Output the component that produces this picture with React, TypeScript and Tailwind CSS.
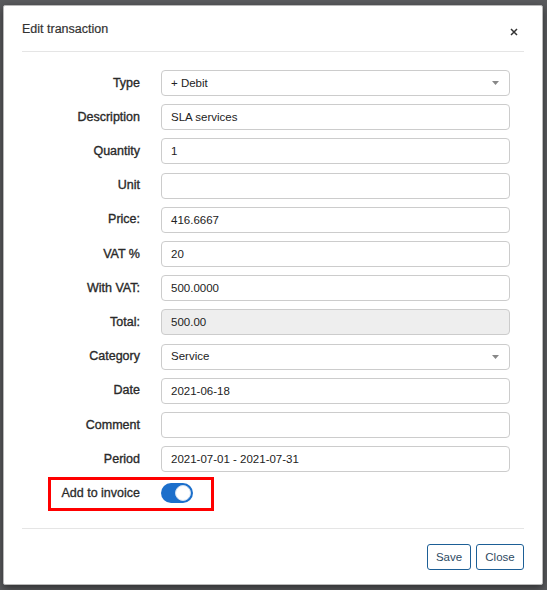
const font = { fontFamily: '"Liberation Sans", Arial, sans-serif' };

type Field = {
  label: string;
  value: string;
  select?: boolean;
  readOnly?: boolean;
};

const fields: Field[] = [
  { label: "Type", value: "+ Debit", select: true },
  { label: "Description", value: "SLA services" },
  { label: "Quantity", value: "1" },
  { label: "Unit", value: "" },
  { label: "Price:", value: "416.6667" },
  { label: "VAT %", value: "20" },
  { label: "With VAT:", value: "500.0000" },
  { label: "Total:", value: "500.00", readOnly: true },
  { label: "Category", value: "Service", select: true },
  { label: "Date", value: "2021-06-18" },
  { label: "Comment", value: "" },
  { label: "Period", value: "2021-07-01 - 2021-07-31" },
];

function FormRow({ field }: { field: Field }) {
  return (
    <div className="flex items-center h-[26px]">
      <label className="w-[118px] shrink-0 text-right text-[12.5px] text-[#2a2a2a] [-webkit-text-stroke:0.35px_#2a2a2a]">
        {field.label}
      </label>
      <div
        className={`ml-[21px] w-[349px] h-[26px] flex items-center justify-between rounded-[4px] border border-[#ccc] px-[9px] text-[11.5px] text-[#222] ${
          field.readOnly ? "bg-[#eee]" : "bg-white"
        }`}
      >
        <span className="mt-[1px]">{field.value}</span>
        {field.select && (
          <svg width="7" height="4" viewBox="0 0 7 4" className="mr-[1px]">
            <path d="M0 0h7L3.5 4z" fill="#888" />
          </svg>
        )}
      </div>
    </div>
  );
}

export default function App() {
  return (
    <div className="w-[547px] h-[590px] bg-[#5a5b5e] overflow-hidden" style={font}>
      <div className="ml-[3px] mt-[5px] w-[540px] h-[580px] bg-white border border-[#b9b9b9] rounded-[2px] shadow-[0_3px_9px_rgba(0,0,0,0.5)] px-[18px] flex flex-col">
        {/* Header */}
        <div className="h-[46px] flex items-center justify-between border-b border-[#e5e5e5]">
          <h4 className="text-[12.5px] text-[#333] mt-[1px] [-webkit-text-stroke:0.2px_#333]">Edit transaction</h4>
          <svg width="8" height="8" viewBox="0 0 8 8" className="mr-[6px] mt-[6px]">
            <path d="M1 1l6 6M7 1L1 7" stroke="#333" strokeWidth="1.5" />
          </svg>
        </div>

        {/* Form */}
        <div className="pt-[18px] flex flex-col gap-[8.2px]">
          {fields.map((f) => (
            <FormRow key={f.label} field={f} />
          ))}
          <div className="relative flex items-center h-[26px]">
            <div className="absolute left-[26px] top-[-3px] w-[166px] h-[34px] border-[3px] border-[#ff0000]" />
            <label className="w-[118px] shrink-0 text-right text-[12.5px] text-[#2a2a2a] [-webkit-text-stroke:0.3px_#2a2a2a]">
              Add to invoice
            </label>
            <div className="ml-[21px] w-[32px] h-[20px] rounded-full bg-[#1c6fcb] flex items-center justify-end px-[2px]">
              <div className="w-[16px] h-[16px] rounded-full bg-white border border-[#cfe0f3]" />
            </div>
          </div>
        </div>

        {/* Footer */}
        <div className="mt-[22px] border-t border-[#e5e5e5] pt-[15px] flex justify-end gap-[5px]">
          <button className="h-[26px] w-[44px] rounded-[3px] border border-[#1d5f96] bg-white text-[11.5px] text-[#2d4a63]">
            Save
          </button>
          <button className="h-[26px] w-[48px] rounded-[3px] border border-[#1d5f96] bg-white text-[11.5px] text-[#2d4a63]">
            Close
          </button>
        </div>
      </div>
    </div>
  );
}
